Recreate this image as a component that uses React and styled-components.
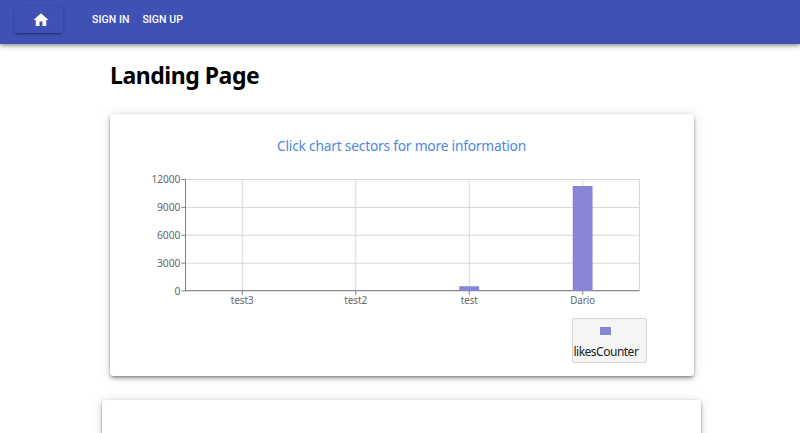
import React from "react";
import styled, { createGlobalStyle } from "styled-components";

const GlobalStyle = createGlobalStyle`
  * { box-sizing: border-box; }
  html, body { margin: 0; background: #fff; }
  body { height: 433px; overflow: hidden; font-family: "Noto Sans", "Open Sans", sans-serif; }
`;

const Page = styled.div`
  height: 433px;
  overflow: hidden;
  display: flex;
  flex-direction: column;
`;

const AppBar = styled.header`
  flex: none;
  height: 44px;
  display: flex;
  align-items: flex-start;
  padding: 6px 0 0 15px;
  background: #3f51b5;
  box-shadow: 0 1px 3px rgba(0, 0, 0, 0.3), 0 3px 5px rgba(0, 0, 0, 0.14), 0 1px 8px rgba(0, 0, 0, 0.1);
`;

const HomeButton = styled.button`
  width: 48px;
  height: 27px;
  padding: 0 0 0 4px;
  margin-right: 29px;
  display: flex;
  align-items: center;
  justify-content: center;
  border: 0;
  border-radius: 3px;
  color: #fff;
  background: #3f51b5;
  box-shadow: 0 2px 1px -1px rgba(0, 0, 0, 0.2), 0 1px 2px rgba(0, 0, 0, 0.17), 0 1px 4px rgba(0, 0, 0, 0.14);
`;

const HomeIcon = styled.svg`
  flex: none;
  width: 18px;
  height: 18px;
`;

const NavLink = styled.a`
  width: ${(p) => p.$width}px;
  margin-right: 13px;
  font: 500 10.5px/28px Roboto, sans-serif;
  letter-spacing: ${(p) => p.$spacing}px;
  white-space: nowrap;
  color: #fff;
`;

const Main = styled.main`
  flex: none;
  width: 584px;
  margin-left: 110px;
`;

const Title = styled.h1`
  height: 70px;
  margin: 0;
  padding-top: 14px;
  font-size: 23px;
  line-height: 34px;
  font-weight: 700;
  letter-spacing: -0.46px;
  white-space: nowrap;
  color: #000;
`;

const Card = styled.section`
  background: #fff;
  border-radius: 3px;
  box-shadow: 0 3px 4px -1px rgba(0, 0, 0, 0.3), 0 1px 3px rgba(0, 0, 0, 0.25), 0 1px 12px rgba(0, 0, 0, 0.13);
`;

const ChartCard = styled(Card)`
  height: 262px;
  display: flex;
  flex-direction: column;
`;

const NextCard = styled(Card)`
  height: 60px;
  margin: 24px -7px 0 -8px;
`;

const Hint = styled.p`
  height: 56px;
  margin: 0;
  padding: 22px 1px 0 0;
  text-align: center;
  font-size: 13.75px;
  line-height: 20px;
  letter-spacing: -0.21px;
  color: #4b87e8;
`;

const Chart = styled.svg`
  display: block;
  flex: none;
  width: 584px;
  height: 148px;
`;

const AxisLabel = styled.text`
  font-size: 11px;
  fill: #666;
`;

const Legend = styled.div`
  align-self: flex-end;
  width: 75px;
  height: 45px;
  margin-right: 47px;
  padding: 8px 0 0 0.5px;
  border: 1px solid #d5d5d5;
  border-radius: 2px;
  background: #f5f5f5;
`;

const Swatch = styled.div`
  width: 11px;
  height: 8px;
  margin-left: 26px;
  background: #8884d8;
`;

const LegendText = styled.div`
  margin-top: 9px;
  font-size: 12px;
  line-height: 16px;
  letter-spacing: -0.5px;
  color: #222;
`;

const BASE_Y = 121;
const LEFT = 75.5;
const RIGHT = 529.5;
const HEIGHT = 111.5;

const ticks = [
  { value: 12000, width: 29 },
  { value: 9000, width: 23.5 },
  { value: 6000, width: 23.5 },
  { value: 3000, width: 23.5 },
  { value: 0, width: 6 },
];

const bars = [
  { name: "test3", value: 0, width: 23 },
  { name: "test2", value: 60, width: 23 },
  { name: "test", value: 510, width: 17 },
  { name: "Dario", value: 11300, width: 25 },
];

const yOf = (value) => BASE_Y - (value / 12000) * HEIGHT;
const xOf = (i) => LEFT + ((RIGHT - LEFT) / bars.length) * (i + 0.5);

function LikesChart() {
  return (
    <Chart viewBox="0 0 584 148">
      <g stroke="#d6d6d6" strokeWidth="1">
        {ticks.map((t) => (
          <line key={t.value} x1={LEFT} x2={RIGHT} y1={yOf(t.value)} y2={yOf(t.value)} />
        ))}
        {bars.map((b, i) => (
          <line key={b.name} x1={xOf(i)} x2={xOf(i)} y1={9.5} y2={BASE_Y} />
        ))}
        <line x1={RIGHT} x2={RIGHT} y1={9.5} y2={BASE_Y} />
      </g>
      <g stroke="#808080" strokeWidth="1">
        <line x1={LEFT} x2={LEFT} y1={9.5} y2={BASE_Y} />
        <line x1={LEFT} x2={RIGHT} y1={BASE_Y - 0.4} y2={BASE_Y - 0.4} />
        {ticks.map((t) => (
          <line key={t.value} x1={LEFT - 4} x2={LEFT} y1={yOf(t.value)} y2={yOf(t.value)} />
        ))}
        {bars.map((b, i) => (
          <line key={b.name} x1={xOf(i)} x2={xOf(i)} y1={BASE_Y} y2={BASE_Y + 4} />
        ))}
      </g>
      {bars.map((b, i) => (
        <rect key={b.name} x={xOf(i) - 10} y={yOf(b.value)} width="19.8" height={BASE_Y - yOf(b.value)} fill="#8884d8" />
      ))}
      {ticks.map((t) => (
        <AxisLabel key={t.value} x={70.4 - t.width} y={yOf(t.value) + 3.8} textLength={t.width} lengthAdjust="spacingAndGlyphs">
          {t.value}
        </AxisLabel>
      ))}
      {bars.map((b, i) => (
        <AxisLabel key={b.name} x={xOf(i) - b.width / 2} y={133.5} textLength={b.width} lengthAdjust="spacingAndGlyphs">
          {b.name}
        </AxisLabel>
      ))}
    </Chart>
  );
}

export default function App() {
  return (
    <Page>
      <GlobalStyle />
      <AppBar>
        <HomeButton aria-label="Home">
          <HomeIcon viewBox="0 0 24 24" fill="currentColor">
            <path d="M10 20v-6h4v6h5v-8h3L12 3 2 12h3v8z" />
          </HomeIcon>
        </HomeButton>
        <NavLink $width={37.4} $spacing={0.08}>SIGN IN</NavLink>
        <NavLink $width={41} $spacing={0.06}>SIGN UP</NavLink>
      </AppBar>
      <Main>
        <Title>Landing Page</Title>
        <ChartCard>
          <Hint>Click chart sectors for more information</Hint>
          <LikesChart />
          <Legend>
            <Swatch />
            <LegendText>likesCounter</LegendText>
          </Legend>
        </ChartCard>
        <NextCard />
      </Main>
    </Page>
  );
}
